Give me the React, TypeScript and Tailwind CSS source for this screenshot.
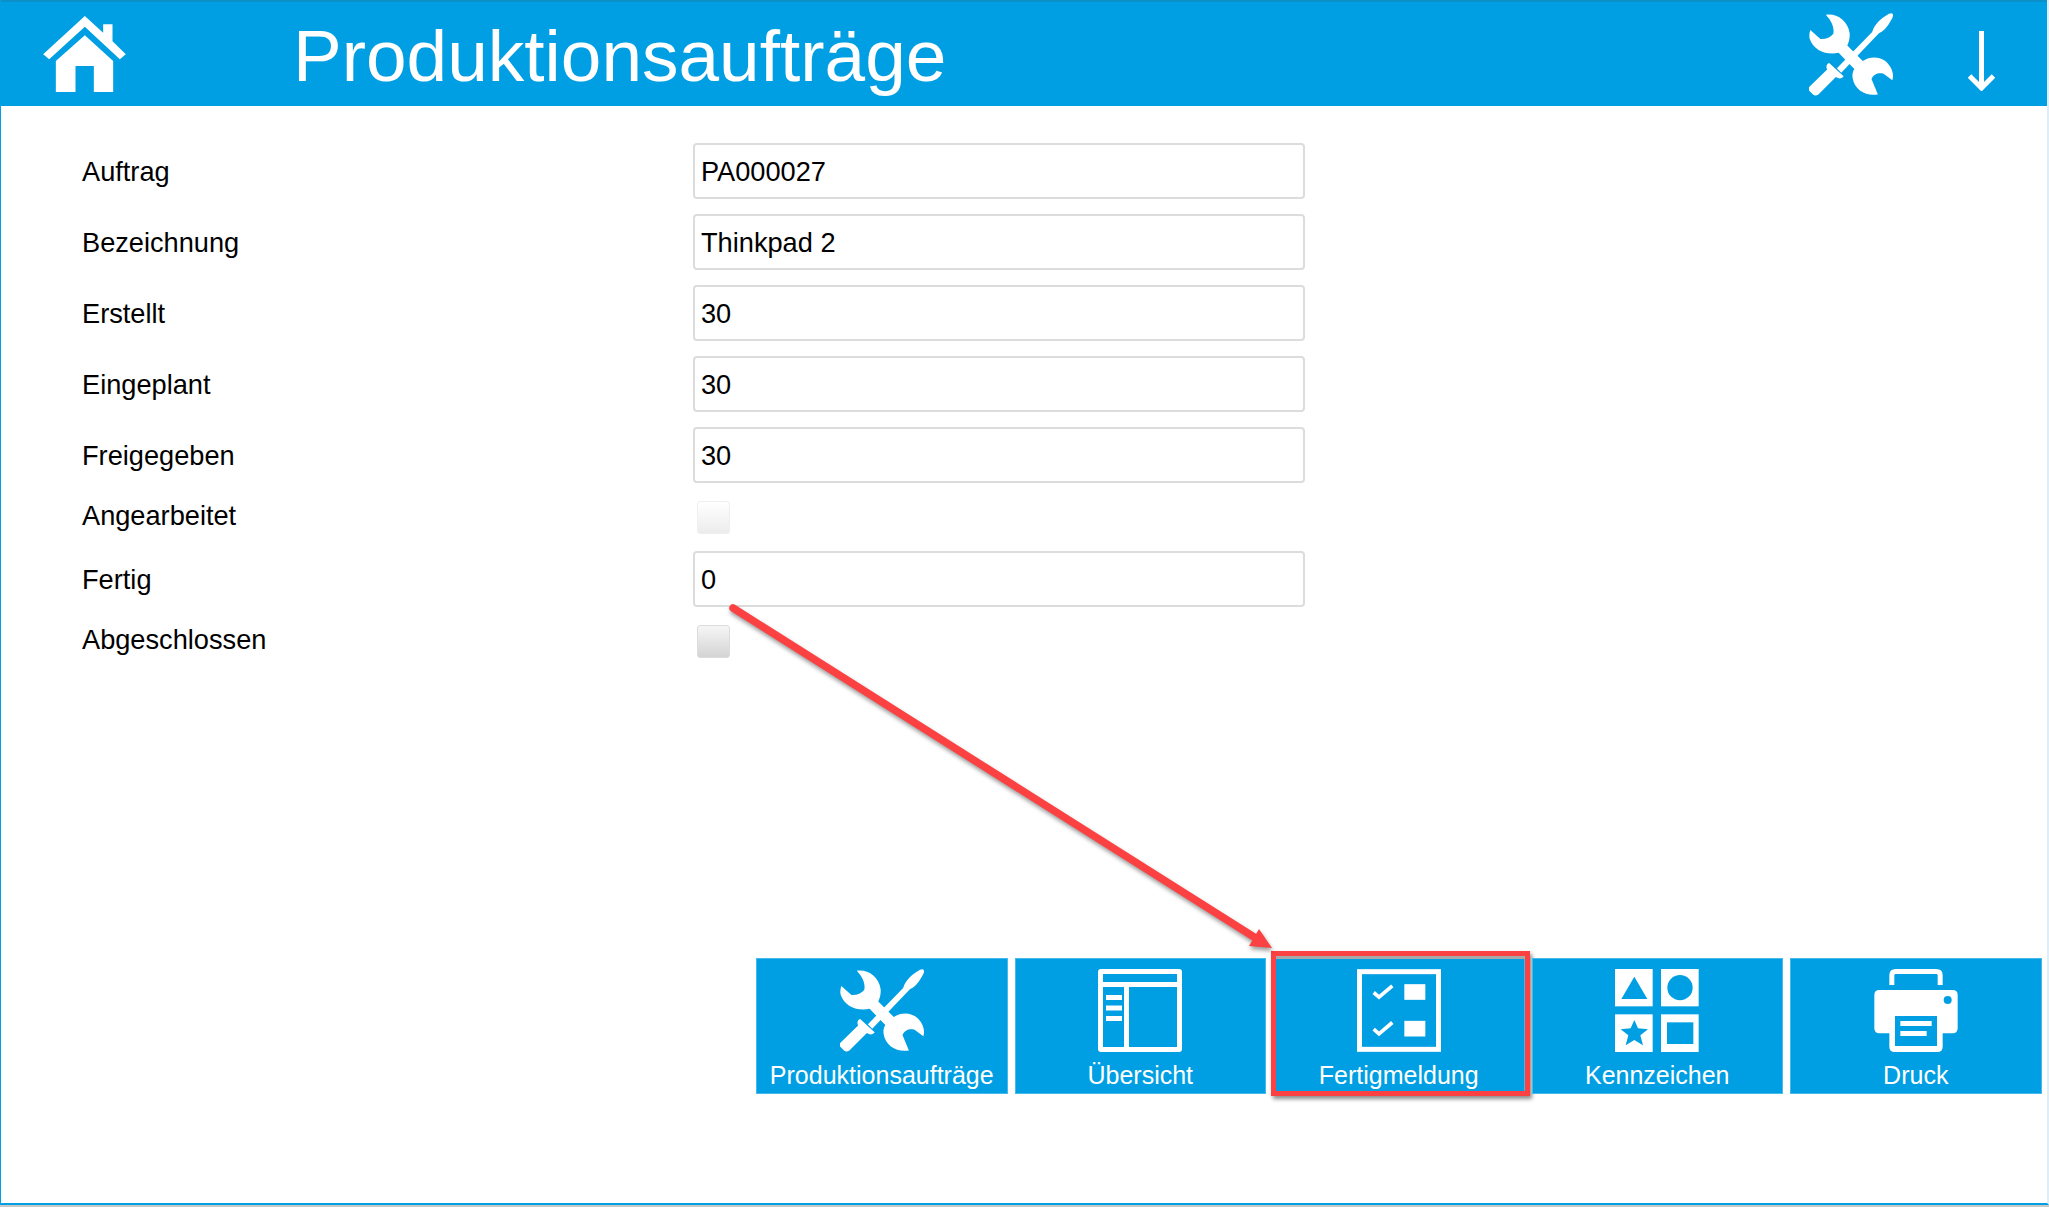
const HomeIcon = () => (
  <svg viewBox="40 30 248 228" className="w-[83px] h-[76px] fill-white">
    <path d="M165 30 L220 80 L220 55 L248 55 L248 106 L288 145 L270 160 L165 62 L58 160 L40 145 Z" />
    <path d="M165 88 L250 165 L250 258 L192 258 L192 180 L137 180 L137 258 L78 258 L78 165 Z" />
  </svg>
)

const ToolsIcon = () => (
  <svg viewBox="30 28 250 246" className="w-[84px] h-[83px] fill-white">
    <path d="M80 33 C112 28 146 50 151 88 C152 102 149 114 144 124 L190 170 C222 150 262 160 276 196 C281 208 281 218 278 228 L252 208 C238 204 222 208 216 224 L235 270 C200 276 166 258 160 222 C158 212 160 202 165 194 L118 146 C84 154 44 140 32 104 C30 96 31 86 34 78 L64 105 C80 106 94 100 102 90 C106 76 100 54 80 33 Z" />
    <path d="M276 28 C281 30 281 36 278 42 C268 60 258 78 238 88 L126 205 L113 192 L218 84 C224 62 246 42 268 30 Z" />
    <path d="M32 246 L84 196 C80 188 82 178 90 176 L133 216 C128 224 118 224 110 218 L58 270 C52 274 46 274 42 270 L30 258 C28 254 28 250 32 246 Z" />
  </svg>
)

const OverviewIcon = () => (
  <svg viewBox="0 0 84 83" className="w-[84px] h-[83px]">
    <rect x="0" y="0" width="84" height="83" rx="3" fill="#fff" />
    <rect x="5" y="5" width="74" height="8" fill="#009fe3" />
    <rect x="5" y="18" width="21" height="60" fill="#009fe3" />
    <rect x="31" y="18" width="48" height="60" fill="#009fe3" />
    <rect x="8" y="26" width="16" height="5" fill="#fff" />
    <rect x="8" y="36.5" width="16" height="5" fill="#fff" />
    <rect x="8" y="47" width="16" height="5" fill="#fff" />
  </svg>
)

const ChecklistIcon = () => (
  <svg viewBox="36 28 252 248" className="w-[84px] h-[83px]">
    <rect x="43.5" y="35.5" width="237" height="233" fill="none" stroke="#fff" strokeWidth="15" />
    <path d="M86 98 L102 112 L142 78 M86 208 L102 222 L142 188" fill="none" stroke="#fff" strokeWidth="11" />
    <rect x="178" y="73" width="63" height="47" fill="#fff" />
    <rect x="178" y="183" width="63" height="47" fill="#fff" />
  </svg>
)

const ShapesIcon = () => (
  <svg viewBox="30 27 252 249" className="w-[84px] h-[83px]">
    <rect x="30" y="27" width="113" height="112" fill="#fff" />
    <rect x="168" y="27" width="113" height="112" fill="#fff" />
    <rect x="30" y="163" width="113" height="113" fill="#fff" />
    <rect x="168" y="163" width="113" height="113" fill="#fff" />
    <path d="M88 50 L127 117 L49 117 Z" fill="#009fe3" />
    <circle cx="225" cy="83" r="38" fill="#009fe3" />
    <path d="M88 180 L99 205 L129 208 L106 226 L114 256 L88 240 L62 256 L70 226 L47 208 L77 205 Z" fill="#009fe3" />
    <rect x="186" y="187" width="79" height="65" fill="#009fe3" />
  </svg>
)

const PrinterIcon = () => (
  <svg viewBox="40 27 250 249" className="w-[84px] h-[83px]">
    <path d="M92.5 75 L92.5 46 Q92.5 34.5 104 34.5 L226 34.5 Q237.5 34.5 237.5 46 L237.5 75" fill="none" stroke="#fff" strokeWidth="15" />
    <path d="M55 90 L275 90 Q290 90 290 105 L290 205 Q290 220 275 220 L245 220 L245 260 Q245 276 229 276 L101 276 Q85 276 85 260 L85 220 L55 220 Q40 220 40 205 L40 105 Q40 90 55 90 Z" fill="#fff" />
    <circle cx="260" cy="120" r="12" fill="#009fe3" />
    <rect x="102" y="168" width="126" height="90" fill="#009fe3" />
    <rect x="118" y="183" width="94" height="15" fill="#fff" />
    <rect x="118" y="213" width="79" height="15" fill="#fff" />
  </svg>
)

const fields = [
  { label: 'Auftrag', value: 'PA000027' },
  { label: 'Bezeichnung', value: 'Thinkpad 2' },
  { label: 'Erstellt', value: '30' },
  { label: 'Eingeplant', value: '30' },
  { label: 'Freigegeben', value: '30' },
  { label: 'Angearbeitet', check: 'faded' },
  { label: 'Fertig', value: '0' },
  { label: 'Abgeschlossen', check: 'normal' },
]

const buttons = [
  { label: 'Produktionsaufträge', icon: <ToolsIcon /> },
  { label: 'Übersicht', icon: <OverviewIcon /> },
  { label: 'Fertigmeldung', icon: <ChecklistIcon />, marked: true },
  { label: 'Kennzeichen', icon: <ShapesIcon /> },
  { label: 'Druck', icon: <PrinterIcon /> },
]

const App = () => {
  return (
    <div className="relative w-[2049px] h-[1209px] overflow-hidden bg-white font-['Liberation_Sans',Arial,sans-serif] text-black">
      <div className="flex flex-col h-[1205px] border-l border-r-2 border-b-2 border-l-[#009fe3] border-r-[#dfeef6] border-b-[#009fe3] shadow-[0_2px_0_#c8c8c8]">
        <header className="flex items-center h-[106px] pl-[42px] pr-[52px] bg-[#009fe3] border-t-2 border-t-[#0d8fc8] text-white">
          <HomeIcon />
          <h1 className="ml-[167px] pt-[4px] text-[73px] leading-[80px] font-normal">Produktionsaufträge</h1>
          <div className="ml-auto flex items-center gap-[75px]">
            <ToolsIcon />
            <svg viewBox="0 0 27 60" className="w-[27px] h-[60px] mt-[14px] fill-none stroke-white">
              <path d="M13.5 0 L13.5 57 M1.5 45 L13.5 57 L25.5 45" strokeWidth="5" />
            </svg>
          </div>
        </header>

        <main className="flex flex-col gap-[15px] pt-[37px] pl-[81px]">
          {fields.map((f) => (
            <div key={f.label} className={`flex items-center ${f.check ? 'h-[38px]' : 'h-[56px]'}`}>
              <span className={`w-[611px] text-[27.2px] ${f.check ? 'pb-[1px]' : 'pt-[3px]'}`}>{f.label}</span>
              {f.check ? (
                <div
                  className={`ml-[4px] w-[33px] h-[33px] rounded-[3px] border ${
                    f.check === 'faded'
                      ? 'border-[#efefef] bg-gradient-to-b from-white to-[#ececec]'
                      : 'border-[#dcdcdc] bg-gradient-to-b from-[#f6f6f6] to-[#d4d4d4]'
                  }`}
                />
              ) : (
                <input
                  readOnly
                  value={f.value}
                  className="w-[612px] h-[56px] px-[6px] pt-[1px] text-[27.2px] bg-white border-2 border-[#dcdcdc] rounded-[4px] outline-none"
                />
              )}
            </div>
          ))}
        </main>

        <div className="flex justify-end gap-[7px] mt-[298px] pr-[5.5px]">
          {buttons.map((b) => (
            <div
              key={b.label}
              className="relative flex flex-col items-center w-[251.5px] h-[136px] pt-[10px] bg-[#009fe3] border border-[#46b9ec] text-white"
            >
              {b.icon}
              <span className="mt-[8px] text-[25px] leading-[30px]">{b.label}</span>
              {b.marked && (
                <div className="absolute -left-[3px] -right-[6px] -top-[8px] -bottom-[3px] border-[5px] border-[#fb4141] shadow-[2px_3px_4px_rgba(0,0,0,0.45),inset_0_3px_0_#a8a8a8]" />
              )}
            </div>
          ))}
        </div>
      </div>

      {/* arrow annotation */}
      <svg viewBox="0 0 2049 1209" className="absolute inset-0 w-[2049px] h-[1209px] pointer-events-none drop-shadow-[1px_3px_2px_rgba(0,0,0,0.4)]">
        <path d="M733 608 L1254 937" fill="none" stroke="#fb4141" strokeWidth="7.5" strokeLinecap="round" />
        <path d="M1272 948 L1249 946 L1259 929 Z" fill="#fb4141" />
      </svg>
    </div>
  )
}

export default App
